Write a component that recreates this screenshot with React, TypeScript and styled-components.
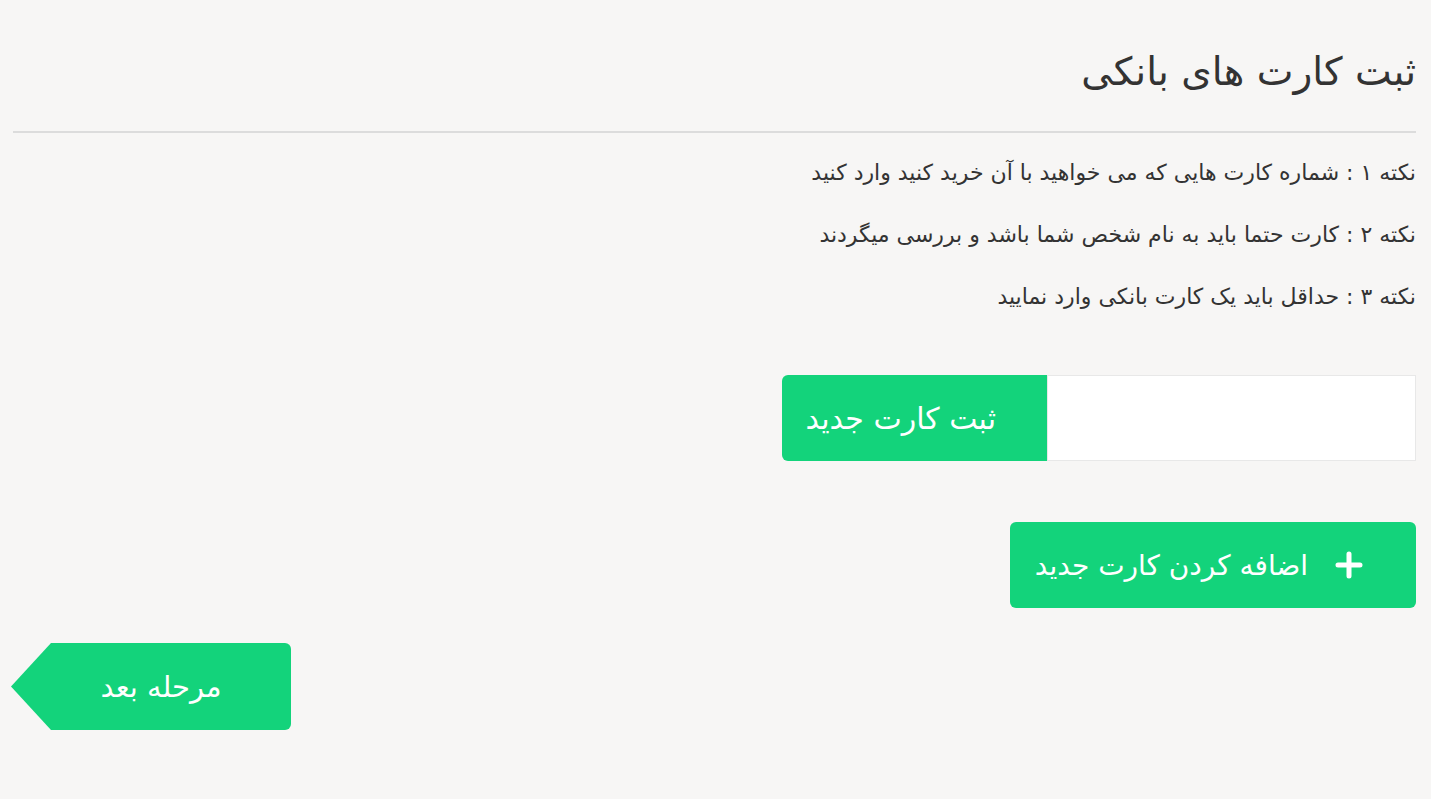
import React from 'react';
import styled, { createGlobalStyle } from 'styled-components';

const GlobalStyle = createGlobalStyle`
  html, body {
    margin: 0;
    padding: 0;
    background: #f7f6f5;
  }
  body {
    font-family: "DejaVu Sans", "Noto Sans", sans-serif;
    color: #333;
  }
`;

const Page = styled.div`
  direction: rtl;
  min-height: 799px;
  padding: 0 15px 0 13px;
  box-sizing: border-box;
  display: flex;
  flex-direction: column;
`;

const Header = styled.h2`
  margin: 0;
  padding: 44px 0 31px;
  font-size: 39px;
  font-weight: 400;
  line-height: 56px;
  color: #333;
  border-bottom: 2px solid #dcdcdc;
`;

const Notes = styled.div`
  display: flex;
  flex-direction: column;
  gap: 32px;
  padding-top: 25px;
`;

const Note = styled.p`
  margin: 0;
  font-size: 22px;
  line-height: 30px;
  color: #333;
`;

const InputGroup = styled.div`
  display: flex;
  width: 634px;
  height: 86px;
  margin-top: 63px;
`;

const CardInput = styled.input`
  flex: 1;
  border: 1px solid #e8e8e8;
  background: #fff;
  outline: none;
  font-size: 20px;
  padding: 0 16px;
`;

const GreenButton = styled.button<{ $radius?: string }>`
  background: #13d37b;
  color: #fff;
  border: none;
  font-family: inherit;
  font-size: 29px;
  border-radius: ${(p) => p.$radius || '6px'};
  cursor: pointer;
  display: flex;
  align-items: center;
  justify-content: center;
`;

const SubmitButton = styled(GreenButton)`
  width: 265px;
  font-size: 30px;
  padding: 0 51px 0 0;
  justify-content: flex-start;
`;

const AddButton = styled(GreenButton)`
  width: 406px;
  height: 86px;
  margin-top: 61px;
  font-size: 28px;
  justify-content: flex-start;
  padding: 0 53px 0 0;
  gap: 27px;
`;

const NextButton = styled(GreenButton)`
  align-self: flex-end;
  width: 280px;
  height: 87px;
  margin: 35px 0 0 -2px;
  padding: 0 0 0 20px;
  clip-path: polygon(40px 0, 100% 0, 100% 100%, 40px 100%, 0 50%);
`;

function Plus() {
  return (
    <svg width="28" height="28" viewBox="0 0 28 28">
      <path d="M14 3v22M3 14h22" stroke="#fff" strokeWidth="5" strokeLinecap="round" />
    </svg>
  );
}

export default function App() {
  return (
    <>
      <GlobalStyle />
      <Page>
        <Header>ثبت کارت های بانکی</Header>
        <Notes>
          <Note>نکته ۱ : شماره کارت هایی که می خواهید با آن خرید کنید وارد کنید</Note>
          <Note>نکته ۲ : کارت حتما باید به نام شخص شما باشد و بررسی میگردند</Note>
          <Note>نکته ۳ : حداقل باید یک کارت بانکی وارد نمایید</Note>
        </Notes>
        <InputGroup>
          <CardInput />
          <SubmitButton $radius="6px 0 0 6px">ثبت کارت جدید</SubmitButton>
        </InputGroup>
        <AddButton>
          <Plus />
          اضافه کردن کارت جدید
        </AddButton>
        <NextButton $radius="0 6px 6px 0">مرحله بعد</NextButton>
      </Page>
    </>
  );
}
